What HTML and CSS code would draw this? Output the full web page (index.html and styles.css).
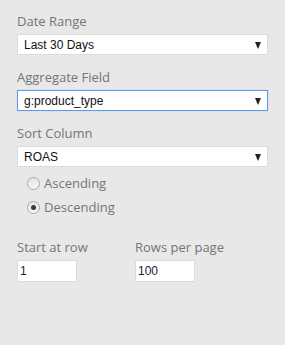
FILE: index.html
```html
<!DOCTYPE html>
<html>
<head>
<meta charset="utf-8">
<link rel="stylesheet" href="styles.css">
</head>
<body>
<div class="panel">
  <div class="field">
    <div class="label">Date Range</div>
    <div class="select"><span>Last 30 Days</span><span class="arrow"></span></div>
  </div>
  <div class="field">
    <div class="label">Aggregate Field</div>
    <div class="select focused"><span>g:product_type</span><span class="arrow"></span></div>
  </div>
  <div class="field sort">
    <div class="label">Sort Column</div>
    <div class="select"><span>ROAS</span><span class="arrow"></span></div>
  </div>
  <div class="radios">
    <div class="radio"><span class="dot"></span><span>Ascending</span></div>
    <div class="radio"><span class="dot checked"></span><span>Descending</span></div>
  </div>
  <div class="paging">
    <div class="col">
      <div class="label">Start at row</div>
      <div class="input">1</div>
    </div>
    <div class="col">
      <div class="label">Rows per page</div>
      <div class="input">100</div>
    </div>
  </div>
</div>
</body>
</html>
```
FILE: styles.css
```css
html, body {
  margin: 0;
  padding: 0;
  background: #e8e8e8;
  height: 100%;
}
body {
  font-family: "Open Sans", "Liberation Sans", sans-serif;
  font-size: 13px;
  color: #757575;
}
.panel {
  padding: 12px 17px 0 17px;
  width: 251px;
}
.field {
  margin-bottom: 13px;
}
.field.sort {
  margin-bottom: 4px;
}
.label {
  line-height: 18px;
  margin-bottom: 4px;
  color: #757575;
  white-space: nowrap;
}
.select {
  box-sizing: border-box;
  height: 21px;
  background: #fff;
  border: 1px solid #dcdcdc;
  display: flex;
  align-items: center;
  justify-content: space-between;
  padding: 0 6px 0 6px;
  font-family: "Liberation Sans", Arial, sans-serif;
  font-size: 12px;
  color: #111;
}
.select.focused {
  border-color: #5d9be6;
  box-shadow: 0 0 1px 0 #9cc3f0;
}
.arrow {
  width: 0;
  height: 0;
  border-left: 3.5px solid transparent;
  border-right: 3.5px solid transparent;
  border-top: 7px solid #222;
  margin-top: 1px;
}
.radios {
  padding-left: 10px;
}
.radio {
  display: flex;
  align-items: center;
  height: 24px;
  gap: 4px;
}
.dot {
  box-sizing: border-box;
  width: 13px;
  height: 13px;
  border-radius: 50%;
  border: 1px solid #a9a9a9;
  background: linear-gradient(#e4e4e4, #f8f8f8);
  display: flex;
  align-items: center;
  justify-content: center;
}
.dot.checked::after {
  content: "";
  width: 5px;
  height: 5px;
  border-radius: 50%;
  background: #3a3a3a;
}
.paging {
  display: grid;
  grid-template-columns: 118px auto;
  margin-top: 19px;
}
.input {
  box-sizing: border-box;
  width: 60px;
  height: 22px;
  background: #fff;
  border: 1px solid #dcdcdc;
  padding-left: 2px;
  font-family: "Liberation Sans", Arial, sans-serif;
  font-size: 12px;
  line-height: 20px;
  color: #1a1a3a;
}
```
